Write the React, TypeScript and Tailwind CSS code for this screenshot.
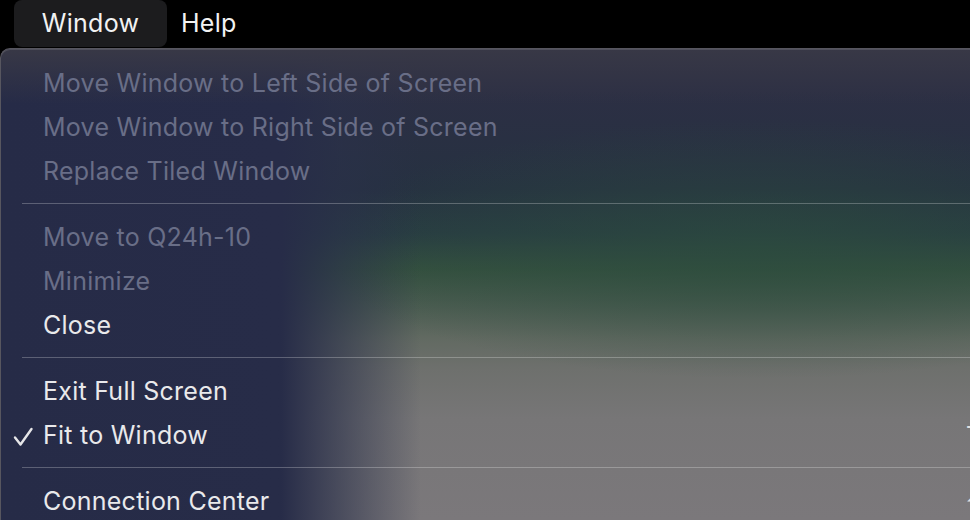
import React from 'react';

type Item = { label: string; disabled?: boolean; checked?: boolean; shortcut?: string } | 'sep';

const ITEMS: Item[] = [
  { label: 'Move Window to Left Side of Screen', disabled: true },
  { label: 'Move Window to Right Side of Screen', disabled: true },
  { label: 'Replace Tiled Window', disabled: true },
  'sep',
  { label: 'Move to Q24h-10', disabled: true },
  { label: 'Minimize', disabled: true },
  { label: 'Close' },
  'sep',
  { label: 'Exit Full Screen' },
  { label: 'Fit to Window', checked: true, shortcut: '⌥⌘F' },
  'sep',
  { label: 'Connection Center', shortcut: '⇧⌘K' },
];

export default function App() {
  return (
    <div className="w-[970px] h-[520px] overflow-hidden bg-black font-['Inter','Liberation_Sans',sans-serif] antialiased tracking-[0.25px]">
      {/* Menu bar */}
      <header className="h-12 flex items-center">
        <div className="ml-[14px] h-[47px] w-[153px] self-start rounded-lg bg-[#1c1c1e] flex items-center justify-center text-[25px] text-[#f2f2f2]">
          Window
        </div>
        <div className="ml-[14px] text-[25px] text-[#f2f2f2]">Help</div>
      </header>

      {/* Dropdown panel */}
      <div className="w-[1100px] h-[480px] rounded-tl-[10px] border-t border-l border-[#57565f] shadow-[inset_0_1px_0_rgba(255,255,255,0.12)] bg-[linear-gradient(to_bottom,rgba(56,56,70,1)_0px,rgba(56,56,70,0)_55px),linear-gradient(to_right,#262b47_0px,#272c48_280px,rgba(42,48,74,0.6)_340px,rgba(42,48,74,0)_420px),radial-gradient(ellipse_440px_130px_at_760px_200px,rgba(44,76,62,0.7),rgba(44,76,62,0)),linear-gradient(to_bottom,#2c2f44_40px,#263141_140px,#283c42_185px,#34503f_220px,#4a5c50_255px,#626a62_290px,#6e706d_320px,#777677_370px,#7b787b_470px)] pt-[13px]">
        {ITEMS.map((it, i) =>
          it === 'sep' ? (
            <div key={i} className="h-[22px] pt-[9px] pl-[21px]">
              <div className="h-px bg-white/25" />
            </div>
          ) : (
            <div key={i} className="h-11 flex items-center relative">
              {it.checked && (
                <svg className="absolute left-[11px] top-[13px]" width="22" height="20" viewBox="0 0 22 20">
                  <path d="M3 10.5 L8.5 17.5 L19.5 2" fill="none" stroke="#e6e6e8" strokeWidth="2.4" strokeLinecap="round" strokeLinejoin="round" />
                </svg>
              )}
              <span
                className={`pl-[42px] w-[964px] text-[25px] ${
                  it.disabled ? 'text-[#696e87]' : 'text-[#e9e9eb]'
                }`}
              >
                {it.label}
              </span>
              {it.shortcut && <span className="text-[24px] text-[#e0e0e0]">{it.shortcut}</span>}
            </div>
          )
        )}
      </div>
    </div>
  );
}
